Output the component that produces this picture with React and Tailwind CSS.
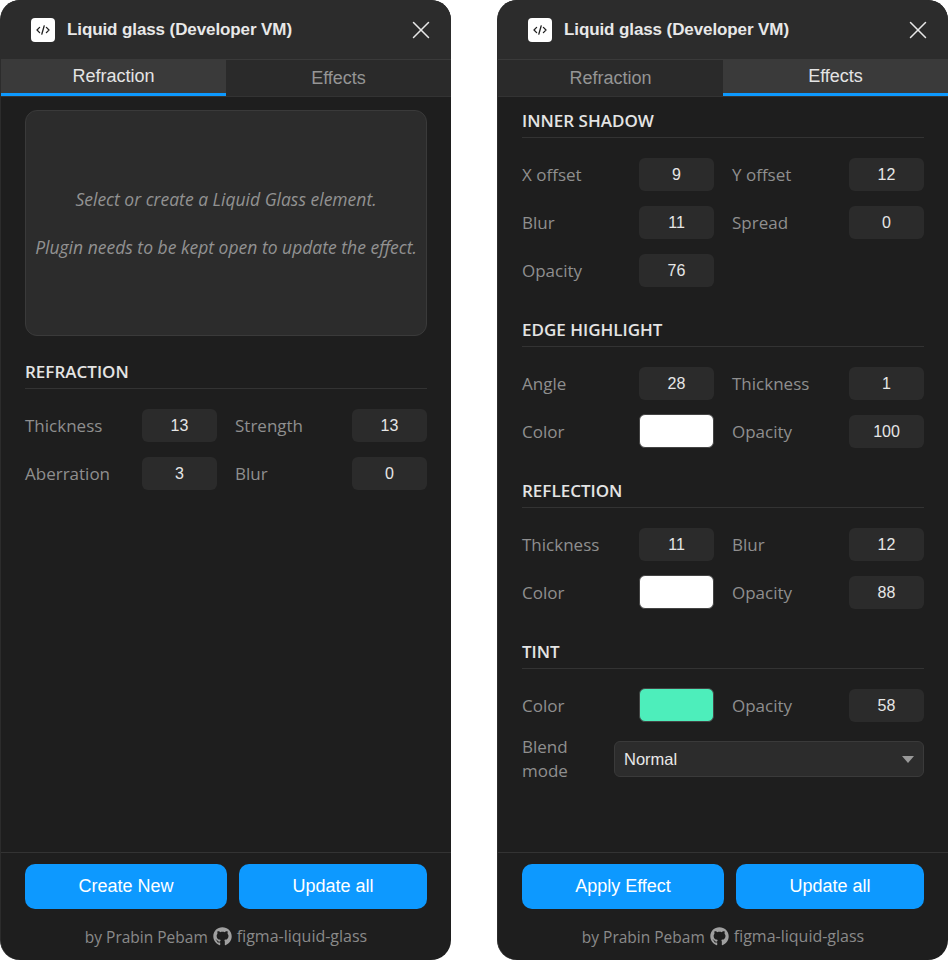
import React from 'react';
import { X } from 'lucide-react';
import { FaGithub } from 'react-icons/fa';

const uiFont = "font-['Open_Sans','Noto_Sans',sans-serif]";
const arial = "font-['Liberation_Sans',Arial,sans-serif]";

const CodeLogo = () => (
  <div className="w-6 h-6 bg-white rounded-[4px] flex items-center justify-center">
    <svg width="16" height="16" viewBox="0 0 16 16" fill="none" stroke="#222" strokeWidth="1.3" strokeLinecap="round" strokeLinejoin="round">
      <path d="M4.6 5.4 2 8l2.6 2.6" />
      <path d="M11.4 5.4 14 8l-2.6 2.6" />
      <path d="M9.2 3.8 6.8 12.2" />
    </svg>
  </div>
);

const Label = ({ children }) => (
  <span className={`${uiFont} text-[17px] text-[#8f8f8f] leading-6`}>{children}</span>
);

const NumberBox = ({ value }) => (
  <div className={`${arial} h-[33px] w-[75px] rounded-md bg-[#2b2b2b] flex items-center justify-center text-[16px] font-medium text-[#e6e6e6]`}>
    {value}
  </div>
);

const Swatch = ({ color }) => (
  <div className={`h-[34px] w-[75px] -mt-px rounded-md border border-[#444] ${color}`}></div>
);

// label + field, twice: the 18px gutter sits in the second column
const Row = ({ children }) => (
  <div className="grid grid-cols-[117px_93px_117px_75px] items-center h-[33px]">
    {children}
  </div>
);

const Section = ({ title, className, children }) => (
  <section className={className}>
    <h2 className={`${uiFont} text-[17px] font-semibold text-[#e4e4e4] leading-6 pb-1 border-b border-[#333] h-[29px]`}>{title}</h2>
    <div className="pt-[20px] flex flex-col gap-[15px]">{children}</div>
  </section>
);

const Panel = ({ active, primary, children }) => (
  <div className="w-[451px] h-[960px] shrink-0 rounded-[20px] overflow-hidden bg-[#1e1e1e] flex flex-col border-l border-[#2c2c2c]">
    <header className="h-[60px] shrink-0 bg-[#2c2c2c] flex items-center justify-between pl-[30px] pr-[15px] border-b border-[#3a3a3a]">
      <div className="flex items-center gap-3">
        <CodeLogo />
        <span className={`${arial} pt-px text-[17px] font-bold text-[#e8e8e8] tracking-[-0.1px]`}>Liquid glass (Developer VM)</span>
      </div>
      <X size={30} strokeWidth={1.2} className="text-[#e8e8e8]" />
    </header>
    <nav className={`${arial} h-[37px] shrink-0 flex bg-[#2a2a2a] border-b border-[#333] text-[18px]`}>
      {['Refraction', 'Effects'].map((tab) => (
        <div
          key={tab}
          className={`flex-1 flex items-center justify-center ${
            tab === active
              ? 'bg-[#3a3a3a] text-[#e4e4e4] border-b-[3px] border-[#0d99ff]'
              : 'text-[#959595]'
          }`}
        >
          {tab}
        </div>
      ))}
    </nav>
    <main className="flex-1 min-h-0 px-6">{children}</main>
    <footer className="h-[108px] shrink-0 border-t border-[#333] px-6 pt-[11px]">
      <div className="flex gap-3">
        <button className={`${arial} h-[45px] w-[202px] rounded-[10px] bg-[#0d99ff] text-white text-[18px]`}>{primary}</button>
        <button className={`${arial} h-[45px] flex-1 rounded-[10px] bg-[#0d99ff] text-white text-[18px]`}>Update all</button>
      </div>
      <div className={`${uiFont} mt-[14px] flex items-center justify-center gap-[5px] text-[16px] text-[#8a8a8a] leading-6`}>
        <span className="pt-[2px] text-[15.5px]">by Prabin Pebam</span>
        <FaGithub size={19} className="text-[#a0a0a0]" />
        <span>figma-liquid-glass</span>
      </div>
    </footer>
  </div>
);

const RefractionTab = () => (
  <div className="pt-[13px]">
    <div className={`${uiFont} h-[226px] rounded-xl border border-[#3a3a3a] bg-[#2c2c2c] flex flex-col items-center justify-center gap-[24px] text-[17.5px] italic text-[#929292] leading-6`}>
      <p>Select or create a Liquid Glass element.</p>
      <p>Plugin needs to be kept open to update the effect.</p>
    </div>
    <Section title="REFRACTION" className="mt-[24px]">
      <Row><Label>Thickness</Label><NumberBox value="13" /><Label>Strength</Label><NumberBox value="13" /></Row>
      <Row><Label>Aberration</Label><NumberBox value="3" /><Label>Blur</Label><NumberBox value="0" /></Row>
    </Section>
  </div>
);

const EffectsTab = () => (
  <div className="pt-3">
    <Section title="INNER SHADOW">
      <Row><Label>X offset</Label><NumberBox value="9" /><Label>Y offset</Label><NumberBox value="12" /></Row>
      <Row><Label>Blur</Label><NumberBox value="11" /><Label>Spread</Label><NumberBox value="0" /></Row>
      <Row><Label>Opacity</Label><NumberBox value="76" /></Row>
    </Section>
    <Section title="EDGE HIGHLIGHT" className="mt-[31px]">
      <Row><Label>Angle</Label><NumberBox value="28" /><Label>Thickness</Label><NumberBox value="1" /></Row>
      <Row><Label>Color</Label><Swatch color="bg-white" /><Label>Opacity</Label><NumberBox value="100" /></Row>
    </Section>
    <Section title="REFLECTION" className="mt-[31px]">
      <Row><Label>Thickness</Label><NumberBox value="11" /><Label>Blur</Label><NumberBox value="12" /></Row>
      <Row><Label>Color</Label><Swatch color="bg-white" /><Label>Opacity</Label><NumberBox value="88" /></Row>
    </Section>
    <Section title="TINT" className="mt-[31px]">
      <Row><Label>Color</Label><Swatch color="bg-[#4deebb]" /><Label>Opacity</Label><NumberBox value="58" /></Row>
      <div className="flex items-center -mt-[2px]">
        <div className="w-[92px]"><Label>Blend mode</Label></div>
        <div className={`${arial} h-[36px] flex-1 rounded-md border border-[#3a3a3a] bg-[#2c2c2c] flex items-center justify-between pl-[9px] pr-[9px] text-[16.5px] text-[#e8e8e8]`}>
          <span>Normal</span>
          <svg width="12" height="7" viewBox="0 0 12 7"><path d="M0 0h12L6 7z" fill="#999" /></svg>
        </div>
      </div>
    </Section>
  </div>
);

export default function App() {
  return (
    <div className="w-[948px] h-[960px] bg-white flex justify-between overflow-hidden">
      <Panel active="Refraction" primary="Create New"><RefractionTab /></Panel>
      <Panel active="Effects" primary="Apply Effect"><EffectsTab /></Panel>
    </div>
  );
}
